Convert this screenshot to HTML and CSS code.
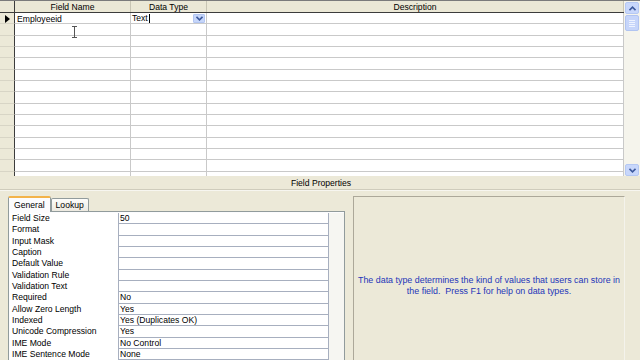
FILE: index.html
```html
<!DOCTYPE html>
<html>
<head>
<meta charset="utf-8">
<link rel="stylesheet" href="styles.css">
</head>
<body>
<div class="app">
  <div class="design">
    <div class="grid">
      <div class="hdr">
        <div class="sel"></div>
        <div class="c1">Field Name</div>
        <div class="c2">Data Type</div>
        <div class="c3">Description</div>
      </div>
      <div class="rows">
        <div class="row">
          <div class="sel"><span class="tri"></span></div>
          <div class="c1">Employeeid</div>
          <div class="c2"><span>Text</span><span class="caret"></span>
            <span class="dd"><svg width="7" height="5" viewBox="0 0 7 5"><path d="M0.5 0.8 L3.5 3.8 L6.5 0.8" fill="none" stroke="#3d5a9e" stroke-width="1.6"/></svg></span>
          </div>
          <div class="c3"></div>
        </div>
        <div class="row"><div class="sel"></div><div class="c1"></div><div class="c2"></div><div class="c3"></div></div>
        <div class="row"><div class="sel"></div><div class="c1"></div><div class="c2"></div><div class="c3"></div></div>
        <div class="row"><div class="sel"></div><div class="c1"></div><div class="c2"></div><div class="c3"></div></div>
        <div class="row"><div class="sel"></div><div class="c1"></div><div class="c2"></div><div class="c3"></div></div>
        <div class="row"><div class="sel"></div><div class="c1"></div><div class="c2"></div><div class="c3"></div></div>
        <div class="row"><div class="sel"></div><div class="c1"></div><div class="c2"></div><div class="c3"></div></div>
        <div class="row"><div class="sel"></div><div class="c1"></div><div class="c2"></div><div class="c3"></div></div>
        <div class="row"><div class="sel"></div><div class="c1"></div><div class="c2"></div><div class="c3"></div></div>
        <div class="row"><div class="sel"></div><div class="c1"></div><div class="c2"></div><div class="c3"></div></div>
        <div class="row"><div class="sel"></div><div class="c1"></div><div class="c2"></div><div class="c3"></div></div>
        <div class="row"><div class="sel"></div><div class="c1"></div><div class="c2"></div><div class="c3"></div></div>
        <div class="row"><div class="sel"></div><div class="c1"></div><div class="c2"></div><div class="c3"></div></div>
        <div class="row"><div class="sel"></div><div class="c1"></div><div class="c2"></div><div class="c3"></div></div>
        <div class="row"><div class="sel"></div><div class="c1"></div><div class="c2"></div><div class="c3"></div></div>
      </div>
    </div>
    <div class="vscroll">
      <div class="sbtn"><svg width="7" height="5" viewBox="0 0 7 5"><path d="M0.5 4.2 L3.5 1.2 L6.5 4.2" fill="none" stroke="#3d5a9e" stroke-width="1.6"/></svg></div>
      <div class="thumb"><i></i><i></i><i></i><i></i></div>
      <div class="track"></div>
      <div class="sbtn"><svg width="7" height="5" viewBox="0 0 7 5"><path d="M0.5 0.8 L3.5 3.8 L6.5 0.8" fill="none" stroke="#3d5a9e" stroke-width="1.6"/></svg></div>
    </div>
    <svg class="ibeam" width="7" height="12" viewBox="0 0 7 12"><path d="M1 0.5 H6 M3.5 0.5 V11.5 M1 11.5 H6" fill="none" stroke="#555" stroke-width="1"/></svg>
  </div>
  <div class="fp-title">Field Properties</div>
  <div class="fp">
    <div class="props">
      <div class="tabs">
        <div class="tab active">General</div>
        <div class="tab">Lookup</div>
      </div>
      <div class="sheet">
        <div class="plist">
          <div class="prow"><div class="lbl">Field Size</div><div class="val">50</div></div>
          <div class="prow"><div class="lbl">Format</div><div class="val"></div></div>
          <div class="prow"><div class="lbl">Input Mask</div><div class="val"></div></div>
          <div class="prow"><div class="lbl">Caption</div><div class="val"></div></div>
          <div class="prow"><div class="lbl">Default Value</div><div class="val"></div></div>
          <div class="prow"><div class="lbl">Validation Rule</div><div class="val"></div></div>
          <div class="prow"><div class="lbl">Validation Text</div><div class="val"></div></div>
          <div class="prow"><div class="lbl">Required</div><div class="val">No</div></div>
          <div class="prow"><div class="lbl">Allow Zero Length</div><div class="val">Yes</div></div>
          <div class="prow"><div class="lbl">Indexed</div><div class="val">Yes (Duplicates OK)</div></div>
          <div class="prow"><div class="lbl">Unicode Compression</div><div class="val">Yes</div></div>
          <div class="prow"><div class="lbl">IME Mode</div><div class="val">No Control</div></div>
          <div class="prow"><div class="lbl">IME Sentence Mode</div><div class="val">None</div></div>
        </div>
        <div class="pscroll"></div>
      </div>
    </div>
    <div class="help">
      <p>The data type determines the kind of values that users can store in<br>the field.&nbsp; Press F1 for help on data types.</p>
    </div>
    <div class="edge"></div>
  </div>
</div>
</body>
</html>
```

FILE: styles.css
```css
* { box-sizing: border-box; }
html, body { margin: 0; padding: 0; }
body {
  width: 640px;
  height: 360px;
  overflow: hidden;
  background: #ece9d8;
  font-family: "Liberation Sans", Arial, sans-serif;
  font-size: 8.6px;
  color: #000;
}
.app { width: 640px; height: 360px; overflow: hidden; }

.design {
  position: relative;
  display: flex;
  height: 176px;
  border-top: 1px solid #7b7b7b;
}
.grid { width: 624px; display: flex; flex-direction: column; background: #fff; }
.hdr {
  display: flex;
  height: 12px;
  background: #ebe8d6;
  border-bottom: 1px solid #3c3c3c;
  line-height: 12px;
}
.hdr > div { text-align: center; border-right: 1px solid #c8c5b4; }
.hdr .sel { border-right: 1px solid #3c3c3c; }
.sel { width: 15px; flex: none; }
.c1 { width: 116px; flex: none; }
.c2 { width: 76px; flex: none; }
.c3 { flex: 1; }

.rows { flex: 1; overflow: hidden; }
.row { display: flex; height: 11.33px; line-height: 12px; }
.row > div { border-bottom: 1px solid #c9c9c9; border-right: 1px solid #c9c9c9; }
.row .sel { background: #ece9d8; border-right: 1px solid #3c3c3c; border-bottom: 1px solid #d8d5c6; position: relative; }
.row .c1 { padding-left: 2px; }
.row .c2 { padding-left: 1px; display: flex; align-items: center; }
.tri {
  display: block;
  width: 0; height: 0;
  margin: 2px 0 0 5px;
  border-top: 4px solid transparent;
  border-bottom: 4px solid transparent;
  border-left: 5px solid #000;
}
.caret { width: 1px; height: 9px; background: #000; margin-left: 1px; }
.dd {
  margin-left: auto;
  margin-right: 1px;
  width: 12px;
  height: 9px;
  background: #c6d6fa;
  border: 1px solid #b3c6f2;
  border-radius: 1px;
  display: flex;
  align-items: center;
  justify-content: center;
}

.vscroll {
  width: 16px;
  display: flex;
  flex-direction: column;
  padding: 1px 1px 0 1px;
  background: #f5f4ec;
}
.sbtn {
  height: 12px;
  flex: none;
  background: #c8d7fb;
  border: 1px solid #b5c8f3;
  border-radius: 2px;
  display: flex;
  align-items: center;
  justify-content: center;
}
.thumb {
  height: 16px;
  margin-top: 1px;
  background: #c6d5fa;
  border: 1px solid #b1c4f1;
  border-radius: 2px;
  display: flex;
  flex-direction: column;
  align-items: center;
  justify-content: center;
  gap: 1px;
}
.thumb i { display: block; width: 6px; height: 1px; background: #eef3ff; }
.track { flex: 1; }
.ibeam { position: absolute; left: 71px; top: 25px; }

.fp-title {
  height: 14px;
  text-align: center;
  line-height: 14px;
  padding-left: 2px;
  border-bottom: 1px solid #cfccbc;
  box-shadow: 0 1px 0 #f7f6f0;
}

.fp { display: flex; padding-top: 6px; height: 170px; }
.props { margin-left: 8px; width: 337px; display: flex; flex-direction: column; }
.tabs { display: flex; height: 15px; align-items: flex-end; position: relative; z-index: 1; }
.tab {
  height: 13px;
  padding: 0 4px;
  line-height: 12px;
  border: 1px solid #919b9c;
  border-bottom: none;
  background: linear-gradient(#fdfdfb, #ece9e0);
  border-radius: 2px 2px 0 0;
}
.tab.active {
  height: 16px;
  padding: 0 5px;
  line-height: 15px;
  background: #fcfcfe;
  border-top: 2px solid #f3b34a;
  margin-bottom: -1px;
}
.sheet {
  flex: 1;
  display: flex;
  background: #fcfcfe;
  border: 1px solid #919b9c;
  padding: 1px 0 0 1px;
}
.plist { width: 319px; background: #fff; }
.prow { display: flex; height: 11.33px; line-height: 11px; }
.lbl { width: 108px; padding-left: 2px; }
.val {
  flex: 1;
  padding-left: 1px;
  border-left: 1px solid #a7afbf;
  border-bottom: 1px solid #a7afbf;
  border-right: 1px solid #a7afbf;
}
.pscroll { flex: 1; background: #f6f6f2; }

.help {
  margin-left: 8px;
  width: 272px;
  border-top: 1px solid #aca899;
  border-left: 1px solid #aca899;
  border-right: 1px solid #f4f3ec;
  padding-top: 78px;
}
.help p {
  margin: 0;
  text-align: center;
  color: #2436b8;
  line-height: 11px;
  font-size: 8.9px;
}
.edge { flex: 1; }
```
